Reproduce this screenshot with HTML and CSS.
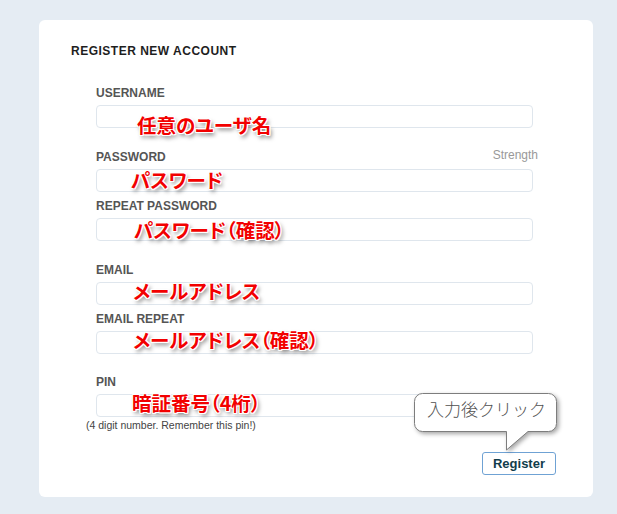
FILE: index.html
```html
<!DOCTYPE html>
<html lang="ja">
<head>
<meta charset="utf-8">
<title>Register New Account</title>
<link rel="stylesheet" href="styles.css">
</head>
<body>
<div class="card">
  <h1 class="title">REGISTER NEW ACCOUNT</h1>
  <div class="fields">
    <div class="field">
      <div class="label-row"><span class="label">USERNAME</span></div>
      <div class="input-wrap"><input class="input" type="text"><span class="note n1">任意のユーザ名</span></div>
    </div>
    <div class="field group">
      <div class="label-row"><span class="label">PASSWORD</span><span class="strength">Strength</span></div>
      <div class="input-wrap"><input class="input" type="password"><span class="note n2">パスワード</span></div>
    </div>
    <div class="field">
      <div class="label-row"><span class="label">REPEAT PASSWORD</span></div>
      <div class="input-wrap"><input class="input" type="password"><span class="note n3">パスワード（確認）</span></div>
    </div>
    <div class="field group">
      <div class="label-row"><span class="label">EMAIL</span></div>
      <div class="input-wrap"><input class="input" type="text"><span class="note n4">メールアドレス</span></div>
    </div>
    <div class="field">
      <div class="label-row"><span class="label">EMAIL REPEAT</span></div>
      <div class="input-wrap"><input class="input" type="text"><span class="note n5">メールアドレス（確認）</span></div>
    </div>
    <div class="field group-last">
      <div class="label-row"><span class="label">PIN</span></div>
      <div class="input-wrap"><input class="input" type="text"><span class="note n6">暗証番号（4桁）</span></div>
    </div>
    <p class="hint">(4 digit number. Remember this pin!)</p>
  </div>
  <div class="actions"><button class="btn" type="button">Register</button></div>
  <div class="callout">
    <svg class="callout-shape" width="150" height="64" viewBox="0 0 150 64">
      <path d="M8.5,0.5 H134.5 A8,8 0 0 1 142.5,8.5 V30.5 A8,8 0 0 1 134.5,38.5 H114 L92.5,57 V38.5 H8.5 A8,8 0 0 1 0.5,30.5 V8.5 A8,8 0 0 1 8.5,0.5 Z" fill="#ffffff" stroke="#7d7d7d" stroke-width="1"/>
    </svg>
    <span class="callout-text">入力後クリック</span>
  </div>
</div>
</body>
</html>
```

FILE: styles.css
```css
html, body {
  margin: 0;
  padding: 0;
  background: #e5ecf3;
}
body {
  font-family: "Liberation Sans", Arial, "Noto Sans CJK JP", sans-serif;
  padding: 20px 0 0 39px;
  height: 514px;
  box-sizing: border-box;
  overflow: hidden;
}
.card {
  position: relative;
  width: 554px;
  height: 477px;
  box-sizing: border-box;
  background: #ffffff;
  border-radius: 6px;
  padding: 24px 37px 0 32px;
}
.title {
  margin: 0;
  font-size: 12px;
  line-height: 14px;
  font-weight: bold;
  letter-spacing: 0.5px;
  color: #1e1e1e;
}
.fields {
  margin: 28px 0 0 25px;
  width: 437px;
}
.field {
  margin-top: 7px;
}
.field:first-child {
  margin-top: 0;
}
.field.group {
  margin-top: 22px;
}
.field.group-last {
  margin-top: 21px;
}
.label-row {
  display: flex;
  justify-content: space-between;
  align-items: flex-start;
  height: 14px;
  margin-right: -5px;
}
.label {
  font-size: 12px;
  line-height: 14px;
  font-weight: bold;
  color: #555555;
}
.strength {
  font-size: 12px;
  line-height: 10px;
  color: #999999;
}
.input-wrap {
  position: relative;
  margin-top: 5px;
}
.input {
  display: block;
  width: 100%;
  height: 23px;
  box-sizing: border-box;
  margin: 0;
  padding: 0 6px;
  border: 1px solid #dfe6ed;
  border-radius: 4px;
  background: #ffffff;
  outline: none;
}
.note {
  position: absolute;
  white-space: nowrap;
  font-family: "Noto Sans CJK JP", sans-serif;
  font-feature-settings: "palt";
  font-size: 19.5px;
  line-height: 1;
  font-weight: bold;
  color: #f20000;
  text-shadow:
    1px 0 0 #fff, -1px 0 0 #fff, 0 1px 0 #fff, 0 -1px 0 #fff,
    1px 1px 0 #fff, -1px -1px 0 #fff, 1px -1px 0 #fff, -1px 1px 0 #fff,
    2px 3px 4px rgba(0, 0, 0, 0.55);
}
.n1 { left: 41px; top: 10px; }
.n2 { left: 35px; top: 1px; }
.n3 { left: 38px; top: 2px; }
.n4 { left: 37px; top: -1px; }
.n5 { left: 37px; top: -1px; }
.n6 { left: 36px; top: -1px; }
.hint {
  margin: 2px 0 0 -10px;
  font-size: 10.5px;
  line-height: 12px;
  color: #444444;
}
.actions {
  display: flex;
  justify-content: flex-end;
  margin-top: 21px;
}
.btn {
  height: 23px;
  box-sizing: border-box;
  padding: 0 10px;
  border: 1px solid #6fa2d4;
  border-radius: 3px;
  background: #ffffff;
  font-family: "Liberation Sans", Arial, sans-serif;
  font-size: 13px;
  font-weight: bold;
  color: #113d4b;
  line-height: 21px;
}
.callout {
  position: absolute;
  left: 375px;
  top: 373px;
  width: 150px;
  height: 64px;
}
.callout-shape {
  display: block;
  filter: drop-shadow(2px 2px 2px rgba(0, 0, 0, 0.35));
}
.callout-text {
  position: absolute;
  left: 13px;
  top: 7px;
  white-space: nowrap;
  font-family: "Noto Sans CJK JP", sans-serif;
  font-size: 17px;
  line-height: 1;
  font-weight: 300;
  color: #505050;
}
```
